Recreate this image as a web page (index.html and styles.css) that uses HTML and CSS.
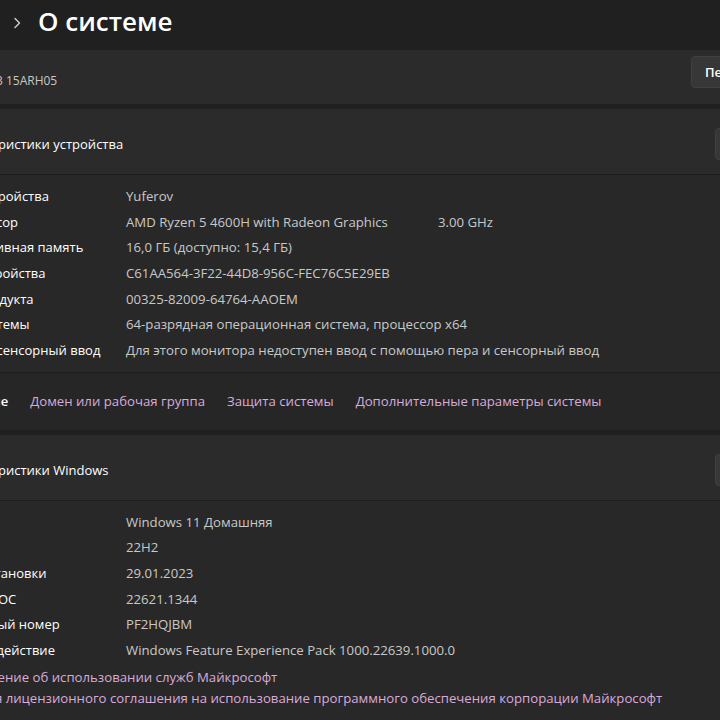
FILE: index.html
```html
<!DOCTYPE html>
<html lang="ru">
<head>
<meta charset="utf-8">
<title>О системе</title>
<link rel="stylesheet" href="styles.css">
</head>
<body>
<div class="header">
  <svg class="chev" width="10" height="12" viewBox="0 0 10 12"><path d="M3 1.5 L7.5 6 L3 10.5" fill="none" stroke="#d0d0d0" stroke-width="1.4" stroke-linecap="round" stroke-linejoin="round"/></svg>
  <h1 class="title">О системе</h1>
</div>
<div class="cards">
  <div class="card device">
    <div class="model">IdeaPad Gaming 3 15ARH05</div>
    <button class="btn">Переименовать этот ПК</button>
  </div>

  <div class="card spec">
    <div class="spec-head">
      <div class="head-title">Характеристики устройства</div>
      <button class="btn">Копировать</button>
    </div>
    <div class="spec-body">
      <div class="row"><span class="lbl">Имя устройства</span><span class="val">Yuferov</span></div>
      <div class="row"><span class="lbl">Процессор</span><span class="val"><span class="cpu">AMD Ryzen 5 4600H with Radeon Graphics</span>3.00 GHz</span></div>
      <div class="row"><span class="lbl">Оперативная память</span><span class="val">16,0 ГБ (доступно: 15,4 ГБ)</span></div>
      <div class="row"><span class="lbl">Код устройства</span><span class="val">C61AA564-3F22-44D8-956C-FEC76C5E29EB</span></div>
      <div class="row"><span class="lbl">Код продукта</span><span class="val">00325-82009-64764-AAOEM</span></div>
      <div class="row"><span class="lbl">Тип системы</span><span class="val">64-разрядная операционная система, процессор x64</span></div>
      <div class="row"><span class="lbl">Перо и сенсорный ввод</span><span class="val">Для этого монитора недоступен ввод с помощью пера и сенсорный ввод</span></div>
    </div>
    <div class="links">
      <span class="links-title">Ссылки по теме</span>
      <a class="link">Домен или рабочая группа</a>
      <a class="link">Защита системы</a>
      <a class="link">Дополнительные параметры системы</a>
    </div>
  </div>

  <div class="card spec win">
    <div class="spec-head">
      <div class="head-title">Характеристики Windows</div>
      <button class="btn">Копировать</button>
    </div>
    <div class="spec-body">
      <div class="row"><span class="lbl">Выпуск</span><span class="val">Windows 11 Домашняя</span></div>
      <div class="row"><span class="lbl">Версия</span><span class="val">22H2</span></div>
      <div class="row"><span class="lbl">Дата установки</span><span class="val">29.01.2023</span></div>
      <div class="row"><span class="lbl">Сборка ОС</span><span class="val">22621.1344</span></div>
      <div class="row"><span class="lbl">Серийный номер</span><span class="val">PF2HQJBM</span></div>
      <div class="row"><span class="lbl">Взаимодействие</span><span class="val">Windows Feature Experience Pack 1000.22639.1000.0</span></div>
      <a class="link doc first">Соглашение об использовании служб Майкрософт</a>
      <a class="link doc">Условия лицензионного соглашения на использование программного обеспечения корпорации Майкрософт</a>
    </div>
  </div>
</div>
</body>
</html>
```

FILE: styles.css
```css
html, body {
  margin: 0;
  padding: 0;
}
body {
  width: 720px;
  height: 720px;
  overflow: hidden;
  background: #202020;
  color: #ffffff;
  font-family: "Open Sans", "Noto Sans", sans-serif;
  font-size: 13px;
}
.header {
  height: 50px;
  display: flex;
  align-items: center;
  padding-left: 12px;
  box-sizing: border-box;
}
.chev {
  display: block;
  margin-top: -4px;
}
.title {
  margin: 0 0 9px 16px;
  font-size: 26px;
  font-weight: 600;
  line-height: 34px;
  color: #ffffff;
}
.cards {
  margin-left: -110px;
  width: 1000px;
}
.card {
  background: #2b2b2b;
}
.device {
  height: 54px;
  display: grid;
  grid-template-columns: 790px auto;
  align-items: center;
  padding-left: 11px;
  box-sizing: border-box;
}
.model {
  font-size: 12px;
  color: #c8c8c8;
  margin-top: 6px;
}
.btn {
  height: 32px;
  padding: 0 13px;
  background: #373737;
  border: 1px solid #404040;
  border-radius: 4px;
  color: #ffffff;
  font-family: inherit;
  font-size: 13px;
  font-weight: 600;
  justify-self: start;
}
.device .btn {
  align-self: start;
  margin-top: 6px;
}
.spec {
  margin-top: 5px;
}
.win {
  margin-top: 5px;
}
.spec-head {
  height: 66px;
  display: grid;
  grid-template-columns: 767px auto;
  align-items: center;
  padding-left: 58px;
  padding-top: 4px;
  box-sizing: border-box;
  border-bottom: 1px solid #1d1d1d;
}
.win .spec-head {
  padding-top: 5px;
}
.spec-head .btn {
  height: 32px;
}
.head-title {
  color: #ffffff;
}
.spec-body {
  background: #282828;
  padding: 9px 0 8px 59px;
}
.row {
  display: grid;
  grid-template-columns: 177px 1fr;
  height: 25.67px;
  line-height: 25.67px;
  white-space: nowrap;
}
.lbl {
  color: #ffffff;
}
.val {
  color: #c8c8c8;
  font-size: 13.2px;
}
.cpu {
  display: inline-block;
  width: 312px;
}
.links {
  height: 58px;
  display: flex;
  align-items: center;
  gap: 22px;
  padding-left: 14px;
  background: #262626;
  border-top: 1px solid #1d1d1d;
  box-sizing: border-box;
}
.links-title {
  font-weight: 600;
  color: #ffffff;
}
.link {
  color: #d8abdb;
  font-size: 13.2px;
  white-space: nowrap;
}
.doc {
  display: block;
  line-height: 21px;
}
.doc.first {
  margin-top: 3px;
}
.win .spec-body {
  padding-bottom: 12px;
}
```
